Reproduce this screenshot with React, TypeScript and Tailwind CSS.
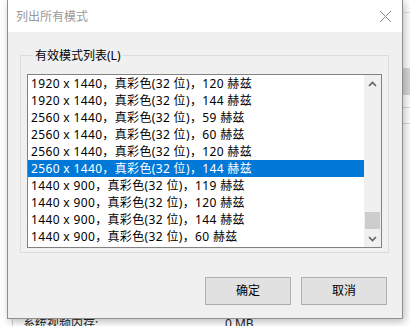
import React from 'react';

const MODES = [
  '1920 x 1440，真彩色(32 位)，120 赫兹',
  '1920 x 1440，真彩色(32 位)，144 赫兹',
  '2560 x 1440，真彩色(32 位)，59 赫兹',
  '2560 x 1440，真彩色(32 位)，60 赫兹',
  '2560 x 1440，真彩色(32 位)，120 赫兹',
  '2560 x 1440，真彩色(32 位)，144 赫兹',
  '1440 x 900，真彩色(32 位)，119 赫兹',
  '1440 x 900，真彩色(32 位)，120 赫兹',
  '1440 x 900，真彩色(32 位)，144 赫兹',
  '1440 x 900，真彩色(32 位)，60 赫兹',
];

const SELECTED = 5;

const font = { fontFamily: "'Noto Sans', 'Noto Sans CJK SC', sans-serif" };

function Chevron({ down }: { down?: boolean }) {
  return (
    <svg width="9" height="6" viewBox="0 0 9 6" className={down ? 'rotate-180' : ''}>
      <path d="M1 5 L4.5 1.5 L8 5" fill="none" stroke="#606060" strokeWidth="1.6" />
    </svg>
  );
}

export default function App() {
  return (
    <div className="relative w-[410px] h-[326px] overflow-hidden bg-white text-black" style={font}>
      {/* window behind the dialog */}
      <div className="absolute left-[402px] top-[12px] w-[8px] h-px bg-[#e3e3e3]" />
      <div className="absolute left-[402px] top-[68px] w-[8px] h-[27px] bg-[#d6d6d6]" />
      <div className="absolute left-[402px] top-[107px] w-[8px] h-px bg-[#dcdcdc]" />
      <div className="absolute left-[402px] top-[123px] w-[8px] h-px bg-[#dcdcdc]" />
      <div className="absolute left-[12px] top-[316px] w-px h-[12px] bg-[#cfcfcf]" />
      <div className="absolute left-[23px] top-[315px] text-[12px] leading-[17px] text-[#222]">系统视频内存:</div>
      <div className="absolute left-[225px] top-[315px] text-[12px] leading-[17px] text-[#222]">0 MB</div>

      {/* dialog */}
      <div className="absolute left-[7px] top-[-1px] w-[396px] h-[320px] border border-[#8f8f8f] bg-[#f0f0f0] shadow-[2px_3px_8px_rgba(0,0,0,0.25)] flex flex-col">
        <div className="h-[32px] bg-white flex items-center justify-between pl-[8px] pr-[10px] pt-px">
          <span className="text-[12px] text-[#9a9a9a]">列出所有模式</span>
          <svg width="13" height="13" viewBox="0 0 13 13">
            <path d="M1 1 L12 12 M12 1 L1 12" stroke="#8a8a8a" strokeWidth="1" />
          </svg>
        </div>

        <div className="flex-1 flex flex-col px-[12px]">
          <fieldset className="mt-[15px] mr-px border border-[#dcdcdc] px-[6px] pb-[4px] pt-[10px]">
            <legend className="ml-[6px] px-[2px] text-[12px] leading-[17px]">有效模式列表(L)</legend>
            <div className="flex h-[174px] border border-[#828282] bg-white">
              <div className="flex-1 flex flex-col text-[12px] leading-[17px] tracking-[0.35px]">
                {MODES.map((m, i) => (
                  <div
                    key={i}
                    className={
                      'h-[17px] pl-[3px] whitespace-nowrap ' +
                      (i === SELECTED ? 'bg-[#0078d7] text-white' : '')
                    }
                  >
                    {m}
                  </div>
                ))}
              </div>
              <div className="w-[17px] bg-[#f0f0f0] flex flex-col items-center">
                <div className="h-[17px] flex items-center justify-center">
                  <Chevron />
                </div>
                <div className="flex-1 w-full flex flex-col justify-end px-px pb-[1px]">
                  <div className="h-[17px] bg-[#cdcdcd]" />
                </div>
                <div className="h-[17px] flex items-center justify-center">
                  <Chevron down />
                </div>
              </div>
            </div>
          </fieldset>

          <div className="flex justify-end gap-[10px] mt-[24px] pr-[3px]">
            <button className="w-[86px] h-[28px] border border-[#adadad] bg-[#e1e1e1] text-[12px]">确定</button>
            <button className="w-[86px] h-[28px] border border-[#adadad] bg-[#e1e1e1] text-[12px]">取消</button>
          </div>
        </div>
      </div>
    </div>
  );
}
